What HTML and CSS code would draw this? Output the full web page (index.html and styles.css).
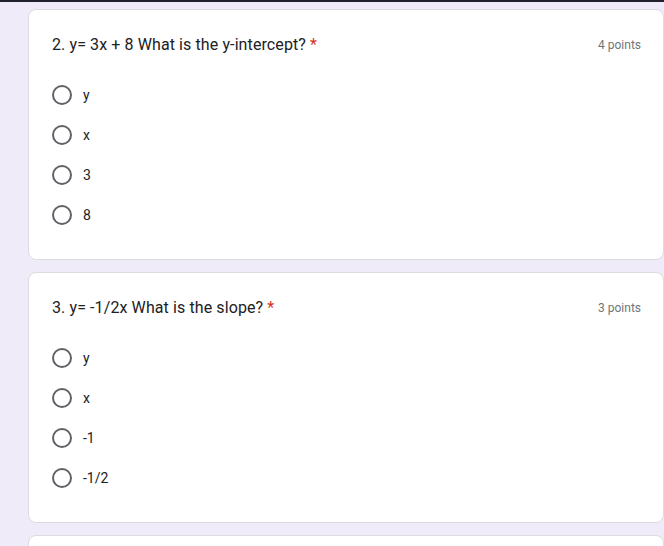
FILE: index.html
```html
<!DOCTYPE html>
<html>
<head>
<meta charset="utf-8">
<link rel="stylesheet" href="styles.css">
</head>
<body>
<div class="topbar"></div>
<main class="list">
  <section class="card">
    <div class="head">
      <div class="title">2. y= 3x + 8 What is the y-intercept? <span class="req">*</span></div>
      <div class="points">4 points</div>
    </div>
    <div class="options">
      <div class="opt"><span class="radio"></span><span class="label">y</span></div>
      <div class="opt"><span class="radio"></span><span class="label">x</span></div>
      <div class="opt"><span class="radio"></span><span class="label">3</span></div>
      <div class="opt"><span class="radio"></span><span class="label">8</span></div>
    </div>
  </section>
  <section class="card">
    <div class="head">
      <div class="title">3. y= -1/2x What is the slope? <span class="req">*</span></div>
      <div class="points">3 points</div>
    </div>
    <div class="options">
      <div class="opt"><span class="radio"></span><span class="label">y</span></div>
      <div class="opt"><span class="radio"></span><span class="label">x</span></div>
      <div class="opt"><span class="radio"></span><span class="label">-1</span></div>
      <div class="opt"><span class="radio"></span><span class="label">-1/2</span></div>
    </div>
  </section>
  <section class="card"></section>
</main>
</body>
</html>
```
FILE: styles.css
```css
html, body {
  margin: 0;
  padding: 0;
  background: #f0ebf8;
  font-family: Roboto, "Liberation Sans", sans-serif;
  overflow: hidden;
}
.topbar {
  height: 2px;
  background: #22212e;
}
.list {
  display: flex;
  flex-direction: column;
  gap: 12px;
  padding: 7px 0 0 28px;
}
.card {
  background: #fff;
  border: 1px solid #dadce0;
  border-radius: 8px;
  padding: 23px 22px 23px 23px;
  height: 203px;
}
.head {
  display: flex;
  justify-content: space-between;
  align-items: center;
  height: 24px;
}
.title {
  font-size: 16px;
  line-height: 24px;
  color: #202124;
  letter-spacing: 0.1px;
}
.req {
  color: #d93025;
}
.points {
  font-size: 12px;
  color: #70757a;
}
.options {
  display: flex;
  flex-direction: column;
  margin-top: 18px;
}
.opt {
  display: flex;
  align-items: center;
  height: 40px;
  gap: 11px;
}
.radio {
  width: 20px;
  height: 20px;
  box-sizing: border-box;
  border: 2px solid #5f6368;
  border-radius: 50%;
}
.label {
  font-size: 14px;
  color: #202124;
}
```
